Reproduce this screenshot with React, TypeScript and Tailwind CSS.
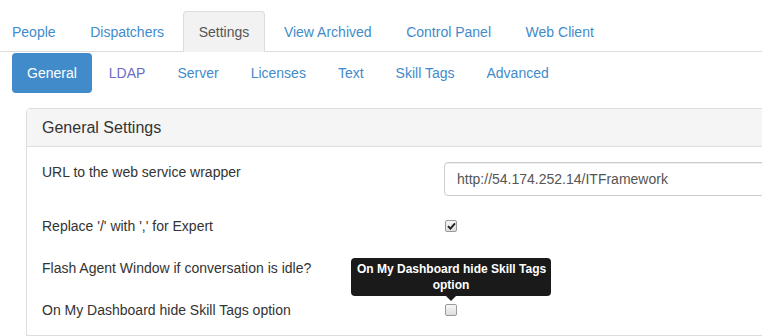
import React from "react";

const topTabs = ["People", "Dispatchers", "Settings", "View Archived", "Control Panel", "Web Client"];
const pills = ["General", "LDAP", "Server", "Licenses", "Text", "Skill Tags", "Advanced"];

function Checkbox({ checked }: { checked?: boolean }) {
  return (
    <span className="mt-[4px] ml-[1px] flex h-[12px] w-[12px] items-center justify-center rounded-[2px] border border-[#9a9a9a] bg-gradient-to-b from-[#f6f6f6] to-[#dedede]">
      {checked && (
        <svg width="9" height="8" viewBox="0 0 9 8">
          <path d="M1 4.2 L3.4 6.6 L8 1.4" fill="none" stroke="#222" strokeWidth="1.9" />
        </svg>
      )}
    </span>
  );
}

export default function App() {
  return (
    <div className="relative h-[336px] w-[762px] overflow-hidden bg-white font-['Liberation_Sans',Arial,sans-serif] text-[14px] leading-[20px] text-[#333]">
      {/* Top tabs */}
      <ul className="flex border-b border-[#ddd] pt-[11px]">
        {topTabs.map((t, i) => (
          <li key={t} className={"mr-[2.6px] mb-[-1px] " + (i === 0 ? "-ml-[4px]" : "")}>
            <span
              className={
                t === "Settings"
                  ? "block rounded-t-[4px] border border-b-0 border-[#ddd] bg-[#f2f2f2] px-[15px] pt-[10px] pb-[10px] text-[#555]"
                  : "block border border-b-0 border-transparent px-[15px] py-[10px] text-[#428bca]"
              }
            >
              {t}
            </span>
          </li>
        ))}
      </ul>

      {/* Sub pills */}
      <ul className="mt-[1px] flex pl-[12px]">
        {pills.map((p, i) => (
          <li key={p} className={i === 0 ? "" : "ml-[2px]"}>
            <span
              className={
                i === 0
                  ? "block rounded-[4px] bg-[#428bca] px-[15px] py-[10px] text-white"
                  : i === 1
                  ? "block px-[15px] py-[10px] text-[#6d6bc6]"
                  : "block px-[15px] py-[10px] text-[#428bca]"
              }
            >
              {p}
            </span>
          </li>
        ))}
      </ul>

      {/* Panel */}
      <div className="mt-[15px] ml-[26px] w-[800px] rounded-tl-[4px] border border-[#ddd]">
        <div className="border-b border-[#ddd] bg-[#f5f5f5] px-[15px] py-[10px] text-[16px] leading-[17px] text-[#333]">
          General Settings
        </div>
        <div className="p-[15px]">
          <div className="mb-[20px] flex">
            <div className="w-[402px]">URL to the web service wrapper</div>
            <div className="flex h-[34px] flex-1 items-center rounded-[4px] border border-[#ccc] px-[12px] text-[#555] shadow-[inset_0_1px_1px_rgba(0,0,0,0.075)]">
              http://54.174.252.14/ITFramework
            </div>
          </div>
          <div className="mb-[22px] flex h-[20px]">
            <div className="w-[402px]">Replace '/' with ',' for Expert</div>
            <div className="flex items-start">
              <Checkbox checked />
            </div>
          </div>
          <div className="mb-[22px] flex h-[20px]">
            <div className="w-[402px]">Flash Agent Window if conversation is idle?</div>
            <div className="relative flex items-start">
              <Checkbox />
              <div className="absolute top-0 left-[-93px] z-10 w-[200px]">
                <div className="rounded-[4px] bg-[#1a1a1a] px-[6px] py-[3px] text-center text-[12px] leading-[16px] font-bold whitespace-nowrap text-white">
                  On My Dashboard hide Skill Tags
                  <br />
                  option
                </div>
                <div className="mx-auto h-0 w-0 border-x-[5px] border-t-[5px] border-x-transparent border-t-[#1a1a1a]" />
              </div>
            </div>
          </div>
          <div className="flex h-[20px]">
            <div className="w-[402px]">On My Dashboard hide Skill Tags option</div>
            <div className="flex items-start">
              <Checkbox />
            </div>
          </div>
        </div>
      </div>
    </div>
  );
}
